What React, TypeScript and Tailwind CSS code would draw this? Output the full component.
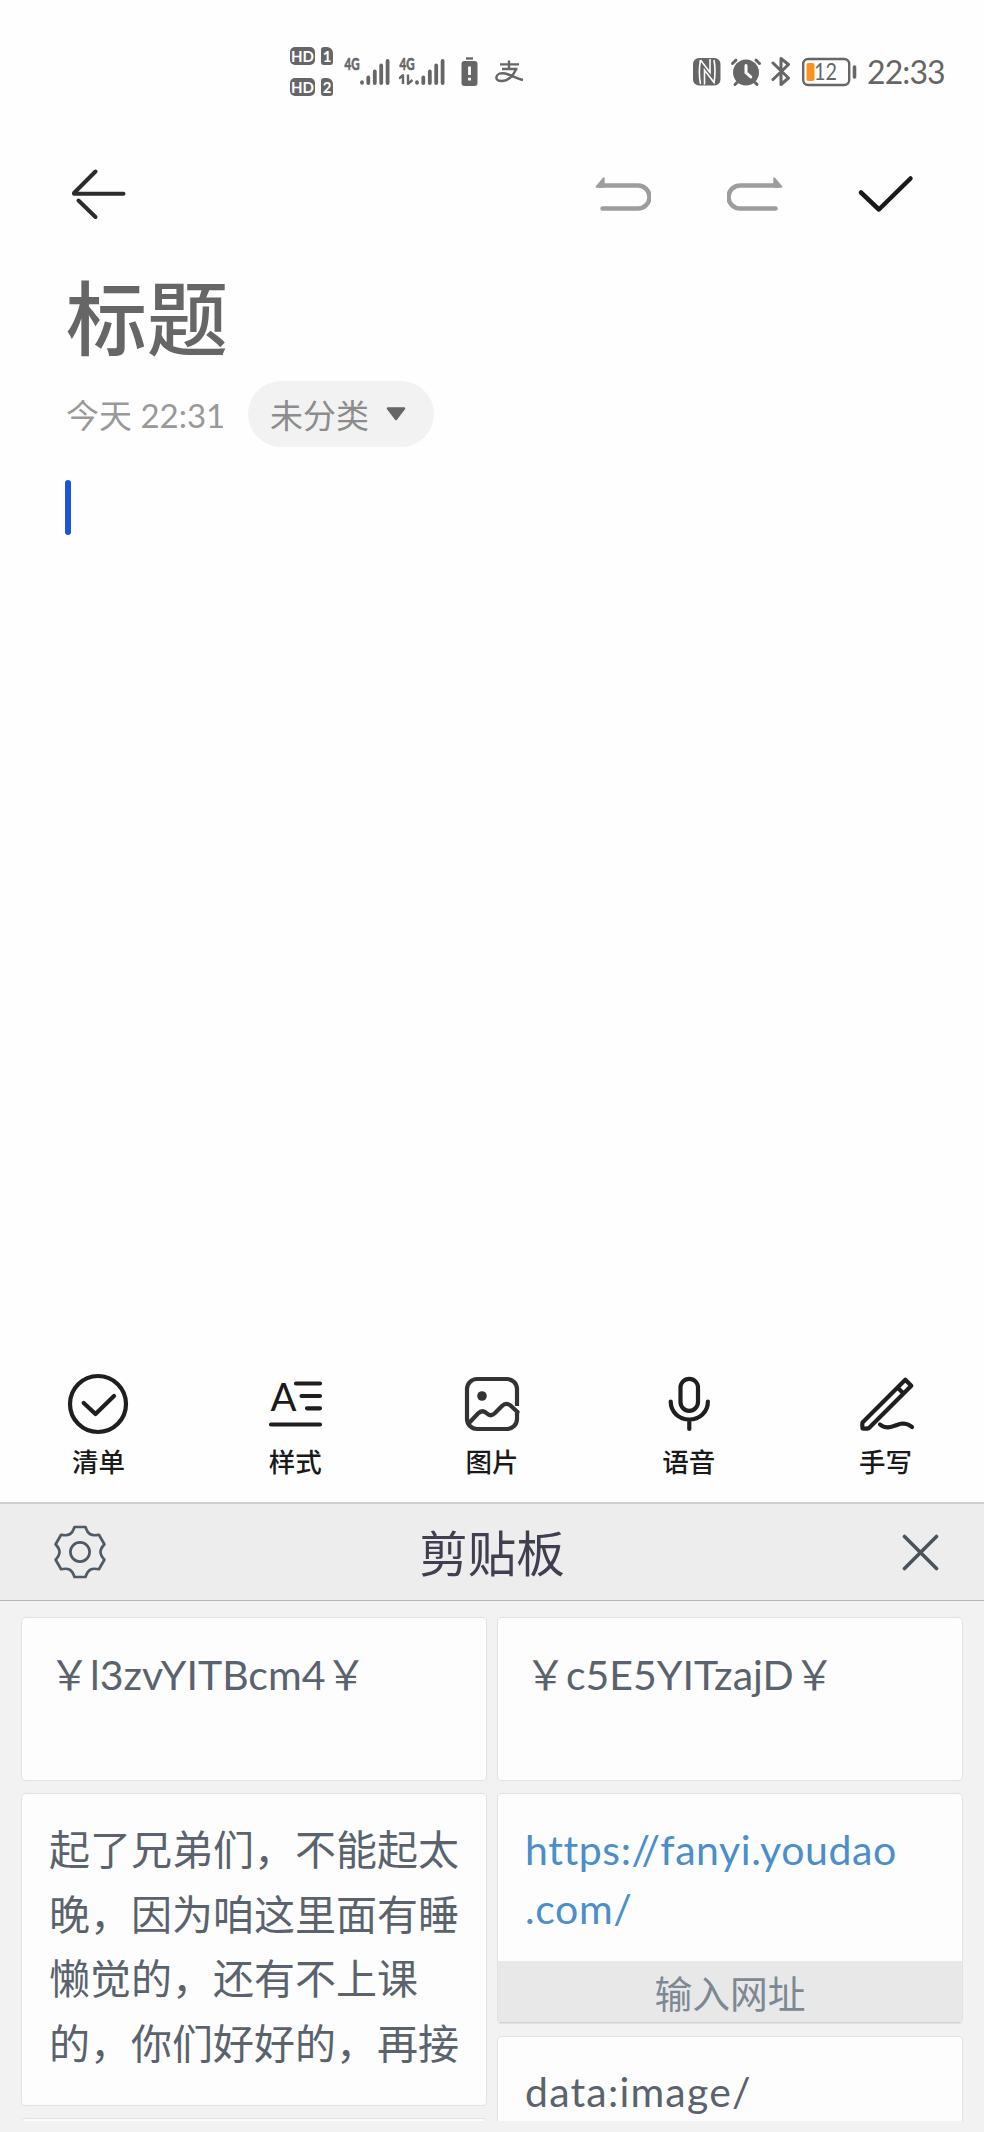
import React from 'react';

const GEAR_TEETH = [0, 60, 120, 180, 240, 300];

const rotate = (x: number, y: number, deg: number) => {
  const a = (deg * Math.PI) / 180;
  return `${(x * Math.cos(a) - y * Math.sin(a)).toFixed(2)} ${(x * Math.sin(a) + y * Math.cos(a)).toFixed(2)}`;
};

// one flat tooth followed by a curved valley, repeated around the center
const gearPath =
  GEAR_TEETH.map(
    (deg, i) =>
      `${i === 0 ? 'M' : 'L'}${rotate(-5.5, -25, deg)}L${rotate(5.5, -25, deg)}C${rotate(8, -17.5, deg)} ${rotate(11.2, -15.7, deg)} ${rotate(-5.5, -25, deg + 60)}`
  ).join('') + 'Z';

const HdBadge = ({ sim }: { sim: string }) => (
  <div className="flex items-center gap-[6px] text-white font-bold leading-none">
    <span className="w-[25px] h-[18px] rounded-[5px] bg-[#666666] text-[15px] flex items-center justify-center">HD</span>
    <span className="w-[12px] h-[18px] rounded-[3px] rounded-tr-[6px] bg-[#666666] text-[15px] flex items-center justify-center">
      {sim}
    </span>
  </div>
);

const Signal = ({ active }: { active?: boolean }) => (
  <svg className="w-[46px] h-[42px]" viewBox="0 -6 46 42" fill="none" stroke="#666666">
    <text
      x="0.5"
      y="13"
      fill="#666666"
      strokeWidth="0.7"
      fontSize="17"
      fontWeight="700"
      textLength="15"
      lengthAdjust="spacingAndGlyphs"
    >
      4G
    </text>
    <path
      d="M18 25.2v.6M24.3 20.5v5.5M30.8 14.5V26M37.2 8.5V26M43.6 4V26"
      strokeWidth="3.8"
      strokeLinecap="round"
    />
    {active && (
      <path d="M0 21.5 4 18.2V27M9 17.5V26.8L13.5 23" strokeWidth="2.4" strokeLinejoin="round" />
    )}
  </svg>
);

const StatusBar = () => (
  <div className="h-[143px] pl-[290px] pr-[41px] flex items-center justify-between shrink-0">
    <div className="flex items-center">
      <div className="flex flex-col gap-[13px]">
        <HdBadge sim="1" />
        <HdBadge sim="2" />
      </div>
      <div className="ml-[11px] flex gap-[9px]">
        <Signal />
        <Signal active />
      </div>
      <svg className="ml-[16px] w-[17px] h-[30px]" viewBox="0 0 17 30">
        <path d="M5 1.5h7" stroke="#666666" strokeWidth="2.4" />
        <rect x="0.5" y="4" width="16" height="25" rx="3" fill="#666666" />
        <path d="M8.5 9.5v8.5M8.5 20.8v2.8" stroke="#fff" strokeWidth="2.8" />
      </svg>
      <svg className="ml-[17px] w-[30px] h-[24px]" viewBox="0 0 30 24" fill="none" stroke="#666666" strokeWidth="2.4">
        <path d="M5 4.4h19M14 0.5v8.3M7 9h15.5" />
        <path d="M21 9c-2 5-6.5 11.5-14 12-4 .2-6-1.5-5.6-4 .5-3 4-4.5 8.6-3.5 6 1.3 12 5.5 18 6.5" />
      </svg>
    </div>
    <div className="flex items-center">
      <svg className="w-[28px] h-[28px]" viewBox="0 0 28 28">
        <rect width="27.5" height="27.5" rx="6" fill="#666666" />
        <path
          d="M7.5 2C6 10 6 18 7.5 26M7.5 2 17 14.5V1M11.5 26.5V12L21 24.5C22.3 17 22.3 9 21 2"
          fill="none"
          stroke="#fff"
          strokeWidth="1.6"
        />
      </svg>
      <svg className="ml-[9px] w-[32px] h-[30px]" viewBox="0 0 32 30" fill="none" stroke="#666666" strokeLinecap="round">
        <circle cx="16" cy="15.5" r="13" fill="#666666" stroke="none" />
        <path d="M2.5 6.5 6 3.2M29.5 6.5 26 3.2M7 25.5 5 27.5M25 25.5l2 2" strokeWidth="3" />
        <path d="M16 8.5v7l4.8 4.5" stroke="#fff" strokeWidth="3" />
      </svg>
      <svg className="ml-[9px] w-[20px] h-[31px]" viewBox="0 0 20 31" fill="none">
        <path
          d="M2 7 17.5 22 10 28.5V2.5l7.5 6L2 23.5"
          stroke="#666666"
          strokeWidth="3"
          strokeLinecap="round"
          strokeLinejoin="round"
        />
      </svg>
      <svg className="ml-[11px] w-[56px] h-[38px]" viewBox="0 -4 56 38">
        <rect x="1.2" y="2" width="46" height="26" rx="5" fill="none" stroke="#666666" strokeWidth="2.4" />
        <rect x="4.5" y="6" width="8" height="18" rx="2" fill="#f7941d" />
        <text x="12" y="23.2" fill="#666666" fontSize="24" textLength="23" lengthAdjust="spacingAndGlyphs">
          12
        </text>
        <path d="M52.5 10v10" stroke="#666666" strokeWidth="3.6" strokeLinecap="round" />
      </svg>
      <span className="ml-[9px] w-[76px] text-[32px] leading-none tracking-[-0.9px] text-[#666666] whitespace-nowrap">
        22:33
      </span>
    </div>
  </div>
);

const UndoIcon = ({ className = '' }: { className?: string }) => (
  <svg className={`w-[56px] h-[40px] ${className}`} viewBox="0 0 56 40" fill="none">
    <path d="M5 11.5h38a11.5 11.5 0 0 1 0 23H7.5" stroke="#9d9d9d" strokeWidth="4.5" strokeLinecap="round" />
    <path d="M1.5 12.8 8.8 4.2V12.8Z" fill="#9d9d9d" stroke="#9d9d9d" strokeWidth="1.8" strokeLinejoin="round" />
  </svg>
);

const Header = () => (
  <header className="h-[102px] px-[70px] flex items-center justify-between shrink-0">
    <svg className="w-[57px] h-[52px]" viewBox="0 0 57 52" fill="none" stroke="#2c2c2c" strokeWidth="4" strokeLinecap="round">
      <path d="M4 25 25.5 3.5M4 25.7H53.5" />
      <path d="M8.5 32.5 25.5 49" />
    </svg>
    <div className="flex items-center">
      <UndoIcon />
      <UndoIcon className="ml-[76px] -scale-x-100" />
      <svg className="ml-[73px] w-[58px] h-[40px]" viewBox="0 0 58 40" fill="none">
        <path
          d="M5 18.5 22.9 35.5 54.5 4.5"
          stroke="#1a1a1a"
          strokeWidth="4.5"
          strokeLinecap="round"
          strokeLinejoin="round"
        />
      </svg>
    </div>
  </header>
);

const tools = [
  {
    name: '清单',
    icon: (
      <>
        <circle cx="31" cy="31" r="28" />
        <path d="M16.7 30 28.5 41 47 23" />
      </>
    ),
  },
  {
    name: '样式',
    icon: (
      <>
        <text x="6.5" y="38.2" fill="#1a1a1a" stroke="none" fontSize="38" textLength="26" lengthAdjust="spacingAndGlyphs">
          A
        </text>
        <path d="M32 10.5H56M37.5 23H56M43 35.3H56M7 51.5H56" />
      </>
    ),
  },
  {
    name: '图片',
    icon: (
      <>
        <path d="M56 33V16A10 10 0 0 0 46 6H16A10 10 0 0 0 6 16V46A10 10 0 0 0 16 56H46A10 10 0 0 0 56 46V39.5" stroke="#333333" strokeLinecap="butt" />
        <path d="M8 50 17 40.5Q21.5 36 26 40.5Q29.5 44 33.5 40.5L41 33Q45 29 49.5 32.5L56.5 39" stroke="#333333" />
        <circle cx="21" cy="23" r="4.8" fill="#333333" stroke="none" />
      </>
    ),
  },
  {
    name: '语音',
    icon: (
      <>
        <rect x="22.5" y="5.8" width="17.5" height="32" rx="8.75" />
        <path d="M12.7 28.5C12.7 39 21 46.5 31.3 46.5S49.9 39 49.9 28.5M31.3 46.5V56" />
      </>
    ),
  },
  {
    name: '手写',
    icon: (
      <>
        <path d="M7.5 49.5 50.3 6.7 56.3 12.7 14 55Q12 56 7.5 55.5Q7 52 7.5 49.5ZM42.5 14.5 48.5 20.5" />
        <path d="M25 51.5C33 58.5 41 51 47.5 50.5Q53 50.5 57 54" />
      </>
    ),
  },
];

const Toolbar = () => (
  <nav className="grid grid-cols-5 pb-5 shrink-0">
    {tools.map((tool) => (
      <div key={tool.name} className="flex flex-col items-center">
        <svg
          className="w-[62px] h-[62px]"
          viewBox="0 0 62 62"
          fill="none"
          stroke="#1f1f1f"
          strokeWidth="4.2"
          strokeLinecap="round"
          strokeLinejoin="round"
        >
          {tool.icon}
        </svg>
        <span className="mt-[7px] text-[26.5px] leading-[40px] font-medium text-[#1a1a1a]">{tool.name}</span>
      </div>
    ))}
  </nav>
);

const Card = ({ className = '', children }: { className?: string; children?: React.ReactNode }) => (
  <div className={`shrink-0 rounded-[4px] border border-[#e2e2e2] bg-[#fdfdfd] overflow-hidden text-[41px] whitespace-nowrap ${className}`}>
    {children}
  </div>
);

const Clipboard = () => (
  <section className="h-[630px] shrink-0 bg-[#f2f2f2] text-[#5a636d] flex flex-col">
    <div className="h-[99px] border-t-2 border-[#cfcfcf] border-b border-b-[#b4b6ba] bg-[#ededed] px-[45px] grid grid-cols-[1fr_auto_1fr] items-center">
      <svg className="ml-[8px] w-[54px] h-[54px]" viewBox="-27 -27 54 54" fill="none" stroke="#4f5a64" strokeWidth="2.7" strokeLinejoin="round">
        <path d={gearPath} />
        <circle r="9.6" />
      </svg>
      <h2 className="pt-[2px] text-[48.5px] leading-[60px] text-[#403f50]">剪贴板</h2>
      <svg className="justify-self-end w-[37px] h-[37px]" viewBox="0 0 37 37">
        <path d="M2.5 2.5 34.5 34.5M34.5 2.5 2.5 34.5" stroke="#4a525c" strokeWidth="3.6" strokeLinecap="round" />
      </svg>
    </div>
    <div className="h-[520px] overflow-hidden grid grid-cols-2 gap-[10px] pt-4 px-[21px]">
      <div className="flex flex-col gap-3">
        <Card className="h-[164px] px-[27px] pt-[28px] leading-[58.5px]">{'\uFFE5l3zvYITBcm4\uFFE5'}</Card>
        <Card className="h-[313px] px-[27px] pt-[24px] leading-[64.6px]">
          起了兄弟们，不能起太
          <br />
          晚，因为咱这里面有睡
          <br />
          懒觉的，还有不上课
          <br />
          的，你们好好的，再接
        </Card>
        <Card className="h-[120px]" />
      </div>
      <div className="flex flex-col gap-3">
        <Card className="h-[164px] px-[27px] pt-[28px] leading-[58.5px]">{'\uFFE5c5E5YITzajD\uFFE5'}</Card>
        <Card className="h-[231px] flex flex-col justify-between">
          <p className="px-[27px] pt-[27px] leading-[58.5px] tracking-[0.6px] text-[#4a8ecb]">
            https://fanyi.youdao
            <br />
            .com/
          </p>
          <div className="h-[62px] border-b border-[#d2d2d2] bg-[#e8e8e8] pt-[3px] text-center text-[37.8px] leading-[59px] text-[#7c8994]">
            输入网址
          </div>
        </Card>
        <Card className="h-[200px] px-[27px] pt-[26px] leading-[58.5px] tracking-[1.2px]">data:image/</Card>
      </div>
    </div>
  </section>
);

const App: React.FC = () => {
  return (
    <div className="w-[984px] h-[2132px] overflow-hidden flex flex-col bg-[#fefefe] font-[Lato,'Noto_Sans_CJK_SC',sans-serif]">
      <StatusBar />
      <Header />
      <main className="flex-1 pl-[66px]">
        <h1 className="mt-[23px] mb-[13px] text-[81px] leading-[100px] font-medium text-[#666666]">标题</h1>
        <div className="h-[66px] flex items-center text-[33px] text-[#999999]">
          <span className="w-[182px] pt-[3px] whitespace-nowrap">今天 22:31</span>
          <div className="w-[186px] h-[66px] rounded-full bg-[#f2f2f2] pl-[22px] flex items-center text-[#8c8c8c]">
            <span className="pt-[3px]">未分类</span>
            <svg className="ml-[17px] w-[20px] h-[16px]" viewBox="0 0 20 16">
              <path d="M2 2.5H18L10 13Z" fill="#666666" stroke="#666666" strokeWidth="2.5" strokeLinejoin="round" />
            </svg>
          </div>
        </div>
        <div className="mt-[33px] -ml-px w-[6px] h-[55px] rounded-full bg-[#1a56d6]" />
      </main>
      <Toolbar />
      <Clipboard />
    </div>
  );
};

export default App;
